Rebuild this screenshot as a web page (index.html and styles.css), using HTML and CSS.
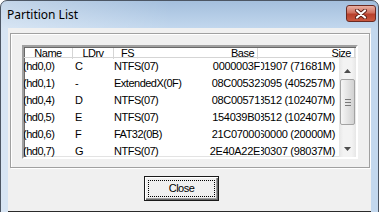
FILE: index.html
```html
<!DOCTYPE html>
<html lang="en">
<head>
    <meta charset="UTF-8">
    <title>Partition List</title>
    <link rel="stylesheet" href="styles.css">
</head>
<body>
    <div class="window">
        <div class="titlebar">
            <span class="title">Partition List</span>
            <div class="close-x">
                <svg width="14" height="10" viewBox="0 0 14 10">
                    <path d="M3 1.5 L11 8.5 M11 1.5 L3 8.5" stroke="#5a1e16" stroke-width="4" stroke-linecap="round"/>
                    <path d="M3 1.5 L11 8.5 M11 1.5 L3 8.5" stroke="#fff" stroke-width="2.2" stroke-linecap="round"/>
                </svg>
            </div>
        </div>
        <div class="client">
            <div class="group">
                <div class="list">
                    <div class="header">
                        <div class="hcol c-name">Name</div>
                        <div class="hcol c-ldrv">LDrv</div>
                        <div class="hcol c-fs">FS</div>
                        <div class="hcol c-base">Base</div>
                        <div class="hcol c-size">Size</div>
                    </div>
                    <div class="body">
                        <div class="rows">
                            <div class="row"><span class="name">(hd0,0)</span><span class="ldrv">C</span><span class="fs">NTFS(07)</span><span class="base">0000003F</span><span class="size"><span>146801907 (71681M)</span></span></div>
                            <div class="row"><span class="name">(hd0,1)</span><span class="ldrv">-</span><span class="fs">ExtendedX(0F)</span><span class="base">08C00532</span><span class="size"><span>829966095 (405257M)</span></span></div>
                            <div class="row"><span class="name">(hd0,4)</span><span class="ldrv">D</span><span class="fs">NTFS(07)</span><span class="base">08C00571</span><span class="size"><span>209728512 (102407M)</span></span></div>
                            <div class="row"><span class="name">(hd0,5)</span><span class="ldrv">E</span><span class="fs">NTFS(07)</span><span class="base">154039B0</span><span class="size"><span>209728512 (102407M)</span></span></div>
                            <div class="row"><span class="name">(hd0,6)</span><span class="ldrv">F</span><span class="fs">FAT32(0B)</span><span class="base">21C07000</span><span class="size"><span>40960000 (20000M)</span></span></div>
                            <div class="row"><span class="name">(hd0,7)</span><span class="ldrv">G</span><span class="fs">NTFS(07)</span><span class="base">2E40A22E</span><span class="size"><span>200780307 (98037M)</span></span></div>
                        </div>
                        <div class="vscroll">
                            <div class="sb-btn">
                                <svg width="7" height="4" viewBox="0 0 7 4"><path d="M3.5 0 L7 4 L0 4 Z" fill="#4d4d4d"/></svg>
                            </div>
                            <div class="thumb"><div class="grip"></div></div>
                            <div class="track"></div>
                            <div class="sb-btn">
                                <svg width="7" height="4" viewBox="0 0 7 4"><path d="M0 0 L7 0 L3.5 4 Z" fill="#4d4d4d"/></svg>
                            </div>
                        </div>
                    </div>
                </div>
            </div>
            <div class="actions">
                <button class="btn"><span class="focus">Close</span></button>
            </div>
        </div>
    </div>
</body>
</html>
```

FILE: styles.css
```css
body {
    margin: 0;
    width: 382px;
    height: 212px;
    overflow: hidden;
    background-color: #fff;
    font-family: "Liberation Sans", Arial, sans-serif;
    font-size: 11px;
    letter-spacing: -0.5px;
    color: #000;
}
.window {
    width: 377px;
    height: 230px;
    border: 1px solid #4c5664;
    border-radius: 7px 7px 0 0;
    background: linear-gradient(to right, rgba(255,255,255,0.35), rgba(255,255,255,0) 45%),
                linear-gradient(to bottom, #a4bfdd, #c3d8ee 28px, #c3d8ee);
}
.titlebar {
    height: 27px;
    display: flex;
    justify-content: space-between;
    align-items: flex-start;
}
.title {
    font-family: "Segoe UI", "Noto Sans", sans-serif;
    font-size: 12px;
    letter-spacing: 0;
    padding: 6px 0 0 6px;
    line-height: 15px;
}
.close-x {
    width: 28px;
    height: 15px;
    margin: 4px 2px 0 0;
    border: 1px solid #6a2a22;
    border-radius: 3px;
    background: linear-gradient(to bottom, #e8b0a4, #d0705e 45%, #b8402c 55%, #c9583f);
    display: flex;
    justify-content: center;
    align-items: center;
}
.client {
    margin: 0 7px;
    height: 178px;
    padding-top: 5px;
    background-color: #f0f0f0;
    border-bottom: 1px solid #2a2a2a;
}
.group {
    margin: 0 2px 0 2px;
    width: 336px;
    padding: 11px 11px 8px 11px;
    border: 1px solid #a0a0a0;
    box-shadow: inset 1px 1px #fff, 1px 1px #fff;
}
.list {
    width: 332px;
    height: 110px;
    border: 2px solid;
    border-color: #a0a0a0 #fff #fff #a0a0a0;
    box-shadow: inset 1px 1px #696969, inset -1px -1px #e3e3e3;
    background-color: #fff;
    overflow: hidden;
}
.header {
    display: grid;
    grid-template-columns: 49px 41px 80px 64px 97px 1px;
    box-sizing: border-box;
    height: 11px;
    padding-top: 1px;
    line-height: 11px;
    border-bottom: 1px solid #d5d5d5;
}
.hcol {
    border-right: 1px solid #d5d5d5;
    white-space: nowrap;
}
.hcol.c-name, .hcol.c-ldrv {
    text-align: center;
}
.hcol.c-fs {
    padding-left: 7px;
    border-right-color: transparent;
}
.hcol.c-base, .hcol.c-size {
    text-align: right;
    padding-right: 3px;
}
.body {
    display: flex;
    height: 99px;
}
.rows {
    flex: 1;
    overflow: hidden;
}
.row {
    display: grid;
    grid-template-columns: 49px 41px 83px 63px 80px;
    height: 17px;
    line-height: 17px;
    white-space: nowrap;
}
.row .name {
    margin-left: -1px;
}
.row .ldrv {
    padding-left: 2px;
}
.row .base {
    text-align: right;
    letter-spacing: -0.3px;
}
.row .size {
    display: flex;
    justify-content: flex-end;
    overflow: hidden;
    margin-left: 1px;
    padding-right: 5px;
    letter-spacing: -0.3px;
}
.vscroll {
    width: 17px;
    display: flex;
    flex-direction: column;
    background: linear-gradient(to right, #e6e6e6, #f3f3f3 25%, #f3f3f3 75%, #e6e6e6);
}
.sb-btn {
    height: 17px;
    display: flex;
    justify-content: center;
    align-items: center;
}
.vscroll .sb-btn:first-child {
    margin-top: 4px;
}
.thumb {
    height: 44px;
    margin: 0 1px;
    border: 1px solid #a3a3a3;
    border-radius: 2px;
    background: linear-gradient(to right, #f6f6f6, #e4e4e4 50%, #d2d2d2);
    display: flex;
    justify-content: center;
    align-items: center;
}
.grip {
    width: 6px;
    height: 5px;
    border-top: 1px solid #7a7a7a;
    border-bottom: 1px solid #7a7a7a;
}
.grip::after {
    content: "";
    display: block;
    margin-top: 2px;
    border-top: 1px solid #7a7a7a;
}
.track {
    flex: 1;
}
.actions {
    padding: 8px 0 0 136px;
}
.btn {
    width: 75px;
    height: 25px;
    padding: 3px;
    border: 1px solid #1a1a1a;
    background-color: #f0f0f0;
    box-shadow: inset 1px 1px #fff, inset -1px -1px #696969, inset -2px -2px #a0a0a0;
    font-family: "Liberation Sans", Arial, sans-serif;
    font-size: 11px;
    letter-spacing: -0.5px;
    display: flex;
}
.btn .focus {
    flex: 1;
    border: 1px dotted #000;
    line-height: 15px;
    text-align: center;
}
```
